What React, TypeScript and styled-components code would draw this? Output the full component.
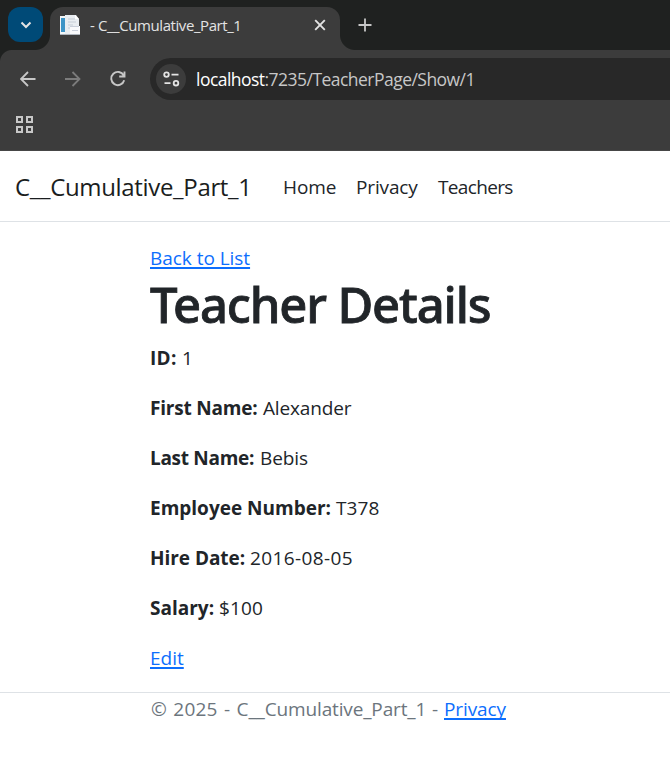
import React from "react";
import styled, { createGlobalStyle } from "styled-components";

const Global = createGlobalStyle`
  *, *::before, *::after { box-sizing: border-box; }
  body {
    margin: 0;
    background: #fff;
    color: #212529;
    font: 400 19px/30px "Open Sans", "Noto Sans", sans-serif;
  }
`;

const Window = styled.div`
  height: 770px;
  overflow: hidden;
`;

const Text = styled.span<{ $track?: number; $word?: number }>`
  letter-spacing: ${(p) => p.$track ?? 0}px;
  word-spacing: ${(p) => p.$word ?? 0}px;
  white-space: pre;
`;

/* Browser chrome */

const Chrome = styled.header`
  height: 151px;
  background: #3c3c3c;
  border-bottom: 1px solid #464646;
`;

const TabStrip = styled.div`
  display: flex;
  height: 50px;
  padding: 7px 0 0 8px;
  background: #1f2120;
`;

const TabSearch = styled.div`
  position: relative;
  z-index: 1;
  display: grid;
  place-items: center;
  width: 35px;
  height: 35px;
  border-radius: 12px;
  background: #004a77;
`;

const Tab = styled.div`
  position: relative;
  display: flex;
  align-items: center;
  width: 290px;
  height: 43px;
  margin-left: 7px;
  padding: 0 14px 7px 10px;
  border-radius: 13px 13px 0 0;
  background: #3c3c3c;
  color: #e3e3e3;
  font-size: 15px;

  &::before,
  &::after {
    content: "";
    position: absolute;
    bottom: 0;
    width: 15px;
    height: 15px;
  }
  &::before {
    left: -15px;
    background: radial-gradient(circle at 0 0, #1f2120 14.5px, #3c3c3c 15.5px);
  }
  &::after {
    right: -15px;
    background: radial-gradient(circle at 100% 0, #1f2120 14.5px, #3c3c3c 15.5px);
  }
`;

const TabTitle = styled.div`
  flex: 1;
  margin-left: 9px;
  line-height: 22px;
`;

const NewTab = styled.div`
  display: grid;
  place-items: center;
  width: 20px;
  height: 36px;
  margin-left: 15px;
`;

const Toolbar = styled.div`
  display: flex;
  align-items: center;
  height: 58px;
  padding-left: 18px;
  background: radial-gradient(circle at 12px 12px, #3c3c3c 11.5px, #1f2120 12.5px) 0 0 / 12px 12px no-repeat;
`;

const NavIcon = styled.div`
  display: grid;
  place-items: center;
  width: 20px;
  height: 20px;
  margin-right: 25px;
`;

const AddressBar = styled.div`
  display: flex;
  align-items: center;
  flex: 1;
  height: 42px;
  margin-left: -3px;
  padding-left: 6px;
  border-radius: 21px 0 0 21px;
  background: #282828;
  color: #c7c7c7;
  font-size: 17.5px;
`;

const SiteInfo = styled.div`
  display: grid;
  place-items: center;
  width: 30px;
  height: 30px;
  margin-right: 10px;
  border-radius: 50%;
  background: #3c3c3c;
`;

const Host = styled.span`
  color: #fff;
`;

const BookmarksBar = styled.div`
  display: flex;
  padding: 7px 0 0 15px;
`;

/* Page */

const Navbar = styled.nav`
  display: flex;
  align-items: center;
  height: 71px;
  padding: 2px 0 0 15px;
  border-bottom: 1px solid #dee2e6;
`;

const Brand = styled.a`
  width: 248px;
  font-size: 24px;
  color: #1a1d20;
`;

const NavLinks = styled.div`
  display: grid;
  grid-template-columns: 73px 82px auto;
  margin-left: 20px;
`;

const NavLink = styled.a`
  color: #212529;
`;

const Main = styled.main`
  height: 470px;
  padding: 21px 0 0 150px;
`;

const Link = styled.a`
  color: #0d6efd;
  text-decoration: underline;
  text-decoration-thickness: 2px;
  text-underline-offset: 2px;
  text-decoration-skip-ink: none;
`;

const Title = styled.h1`
  margin: 1px 0 9px;
  font: 500 49px/60px "Noto Sans", "Open Sans", sans-serif;
  letter-spacing: -1.15px;
  -webkit-text-stroke: 0.8px #212529;
`;

const Field = styled.p`
  display: flex;
  margin: 0 0 20px;
`;

const Label = styled.b<{ $width: number }>`
  flex: none;
  width: ${(p) => p.$width}px;
`;

const Footer = styled.footer`
  padding: 1px 0 0 151px;
  border-top: 1px solid #dee2e6;
  color: #6c757d;
`;

const FooterText = styled.span`
  display: inline-block;
  width: 293px;
`;

type FieldData = { label: string; labelTrack: number; width: number; value: string; track: number };

const fields: FieldData[] = [
  { label: "ID:", labelTrack: 0.3, width: 32, value: "1", track: 0 },
  { label: "First Name:", labelTrack: -0.2, width: 113, value: "Alexander", track: -0.15 },
  { label: "Last Name:", labelTrack: -0.3, width: 110, value: "Bebis", track: -0.1 },
  { label: "Employee Number:", labelTrack: 0, width: 186, value: "T378", track: 0.1 },
  { label: "Hire Date:", labelTrack: -0.05, width: 100, value: "2016-08-05", track: 0.4 },
  { label: "Salary:", labelTrack: 0, width: 69, value: "$100", track: 0.1 },
];

const DocumentIcon = () => (
  <svg width="21" height="21" viewBox="0 0 21 21">
    <path d="M0 1h5v18H0z" fill="#f2f5f7" />
    <path d="M1 3h4v14H1z" fill="#3d94c6" />
    <path d="M5 0h11l3 4v15H5z" fill="#e9edf1" />
    <path d="M15 0v4h4z" fill="#fff" />
    <path d="M8 4h7M8 7h8M8 10h5M8 13h2" stroke="#c5cdd6" />
    <path d="M10 11h10v8H10z" fill="#f8f9fb" />
    <path d="M10 11.5h9M12 15.5h6" stroke="#c9cfda" />
    <path d="M0 19.5h20" stroke="#aeb5bd" />
  </svg>
);

const ArrowIcon = ({ forward = false }: { forward?: boolean }) => (
  <svg width="16" height="16" viewBox="0 0 16 16" fill="none" stroke={forward ? "#7c7c7c" : "#c7c7c7"} strokeWidth="1.8">
    <path d={forward ? "M0 8h14M7.500 1l7 7-7 7" : "M15.5 8h-14M8 1L1 8l7 7"} />
  </svg>
);

const ReloadIcon = () => (
  <svg width="18" height="18" viewBox="0 0 18 18" fill="none" stroke="#c7c7c7" strokeWidth="1.9">
    <path d="M14.700 5.500A6.600 6.600 0 1 0 15.200 10.300M15.500 1.500v5h-5.300" />
  </svg>
);

const TuneIcon = () => (
  <svg width="18" height="16" viewBox="0 0 18 16" fill="none" stroke="#e3e3e3" strokeWidth="1.8">
    <circle cx="4.500" cy="3.6" r="2.3" />
    <path d="M9.500 3.6h7M2.500 12.2h6" />
    <circle cx="14" cy="12.2" r="2.3" />
  </svg>
);

const AppsIcon = () => (
  <svg width="20" height="20" viewBox="0 0 20 20" fill="none" stroke="#c7c7c7" strokeWidth="2">
    <path d="M2 2h5v5H2zM12 2h5v5h-5zM2 12h5v5H2zM12 12h5v5h-5z" />
  </svg>
);

export default function App() {
  return (
    <Window>
      <Global />
      <Chrome>
        <TabStrip>
          <TabSearch>
            <svg width="12" height="8" viewBox="0 0 12 8" fill="none" stroke="#e3e3e3" strokeWidth="2">
              <path d="M1.5 1.5L6 6l4.5-4.5" />
            </svg>
          </TabSearch>
          <Tab>
            <DocumentIcon />
            <TabTitle>
              <Text $track={-0.42}>- C__Cumulative_Part_1</Text>
            </TabTitle>
            <svg width="12" height="12" viewBox="0 0 12 12" stroke="#e3e3e3" strokeWidth="1.9">
              <path d="M1.2 1.2l9.6 9.6M10.8 1.2l-9.6 9.6" />
            </svg>
          </Tab>
          <NewTab>
            <svg width="14" height="14" viewBox="0 0 14 14" stroke="#c7c7c7" strokeWidth="1.8">
              <path d="M7 0.5v13M0.5 7h13" />
            </svg>
          </NewTab>
        </TabStrip>
        <Toolbar>
          <NavIcon><ArrowIcon /></NavIcon>
          <NavIcon><ArrowIcon forward /></NavIcon>
          <NavIcon><ReloadIcon /></NavIcon>
          <AddressBar>
            <SiteInfo><TuneIcon /></SiteInfo>
            <Text $track={-0.53}><Host>localhost</Host>:7235/TeacherPage/Show/1</Text>
          </AddressBar>
        </Toolbar>
        <BookmarksBar><AppsIcon /></BookmarksBar>
      </Chrome>
      <Navbar>
        <Brand><Text $track={-0.33}>C__Cumulative_Part_1</Text></Brand>
        <NavLinks>
          <NavLink><Text $track={-0.1}>Home</Text></NavLink>
          <NavLink><Text $track={-0.15}>Privacy</Text></NavLink>
          <NavLink><Text $track={-0.65}>Teachers</Text></NavLink>
        </NavLinks>
      </Navbar>
      <Main>
        <Link><Text $track={-0.04}>Back to List</Text></Link>
        <Title>Teacher Details</Title>
        {fields.map((f) => (
          <Field key={f.label}>
            <Label $width={f.width}><Text $track={f.labelTrack}>{f.label}</Text></Label>
            <Text $track={f.track}>{f.value}</Text>
          </Field>
        ))}
        <Link>Edit</Link>
      </Main>
      <Footer>
        <FooterText>
          <Text $track={0.2} $word={1.2}>© 2025 - </Text>
          <Text $track={-0.15} $word={1}>C__Cumulative_Part_1 -</Text>
        </FooterText>
        <Link><Text $track={-0.1}>Privacy</Text></Link>
      </Footer>
    </Window>
  );
}
